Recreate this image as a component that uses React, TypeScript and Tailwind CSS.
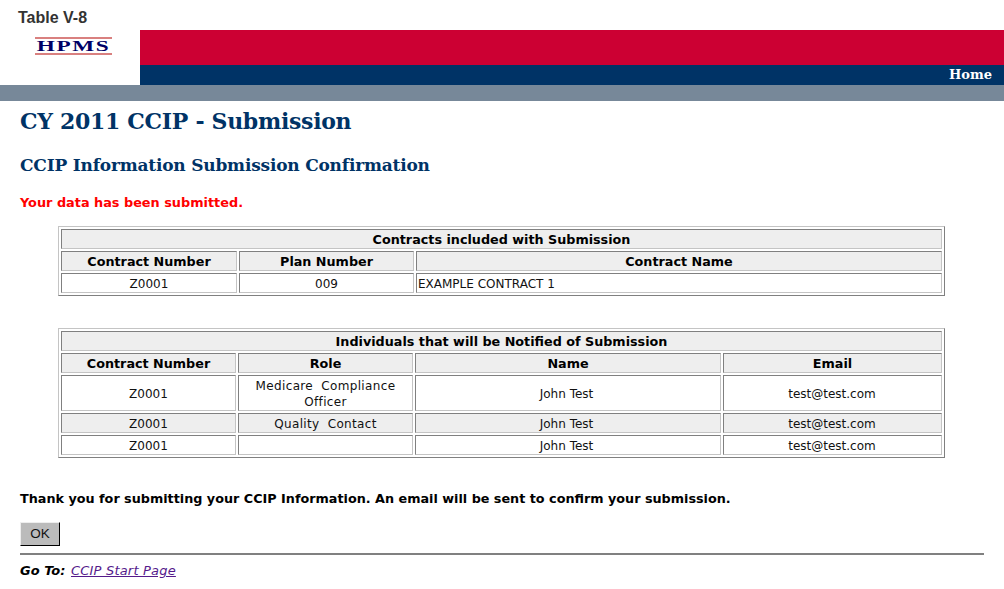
const verdana = 'font-["DejaVu_Sans",Verdana,sans-serif]';

const thClass =
  'h-[20px] pt-[2px] pb-0 text-center text-[12.75px] leading-[16px] font-bold text-black bg-[#eeeeee] border border-t-[#808080] border-l-[#808080] border-r-[#c4c4c4] border-b-[#c4c4c4]';
const tdClass =
  'h-[20px] pt-[2px] pb-0 text-center text-[12px] leading-[16px] font-normal text-[#111] border border-t-[#808080] border-l-[#808080] border-r-[#c4c4c4] border-b-[#c4c4c4]';
const tableClass =
  'ml-[38px] w-[887px] table-fixed border-separate border-spacing-[2px] border border-t-[#c4c4c4] border-l-[#c4c4c4] border-r-[#808080] border-b-[#808080]';

const contracts = [{ number: 'Z0001', plan: '009', name: 'EXAMPLE CONTRACT 1' }];

const individuals = [
  { number: 'Z0001', role: 'Medicare Compliance Officer', name: 'John Test', email: 'test@test.com' },
  { number: 'Z0001', role: 'Quality Contact', name: 'John Test', email: 'test@test.com' },
  { number: 'Z0001', role: '', name: 'John Test', email: 'test@test.com' },
];

const Header: React.FC = () => (
  <div>
    <div className="flex h-[85px]">
      <div className="w-[140px] shrink-0">
        <p className='pl-[18px] pt-[9px] font-["Liberation_Sans",Arial,sans-serif] text-[16px] leading-[17px] font-bold text-[#333]'>
          Table V-8
        </p>
        <div className="ml-[35px] mt-[11px] w-[77px] border-y-2 border-[#d9807f] text-center">
          <p className='scale-x-[1.55] font-["Liberation_Serif",serif] text-[15px] leading-[14px] font-bold tracking-[1px] text-[#000066]'>
            HPMS
          </p>
        </div>
      </div>
      <div className="flex flex-1 flex-col">
        <div className="h-[30px]" />
        <div className="h-[35px] bg-[#cc0033]" />
        <div className='h-[20px] bg-[#003366] pr-[12px] text-right font-["DejaVu_Serif",serif] text-[13px] leading-[20px] font-bold text-white'>
          Home
        </div>
      </div>
    </div>
    <div className="h-[16px] bg-[#778899]" />
  </div>
);

export default function App() {
  return (
    <div className={`h-[589px] w-[1004px] overflow-hidden bg-white ${verdana}`}>
      <Header />
      <div className="px-[20px]">
        <h1 className='pt-[5px] font-["DejaVu_Serif",serif] text-[22px] leading-[30px] font-bold tracking-[-0.3px] text-[#003366]'>
          CY 2011 CCIP - Submission
        </h1>
        <h2 className='pt-[17px] font-["DejaVu_Serif",serif] text-[17px] leading-[24px] font-bold tracking-[-0.2px] text-[#003366]'>
          CCIP Information Submission Confirmation
        </h2>
        <p className="pt-[17px] text-[12.85px] leading-[18px] font-bold text-[#ff0000]">
          Your data has been submitted.
        </p>

        <table className={`mt-[14px] ${tableClass}`}>
          <colgroup>
            <col className="w-[176px]" />
            <col className="w-[175px]" />
            <col />
          </colgroup>
          <thead>
            <tr>
              <th colSpan={3} className={thClass}>Contracts included with Submission</th>
            </tr>
            <tr>
              <th className={thClass}>Contract Number</th>
              <th className={thClass}>Plan Number</th>
              <th className={thClass}>Contract Name</th>
            </tr>
          </thead>
          <tbody>
            {contracts.map((c) => (
              <tr key={c.name}>
                <td className={tdClass}>{c.number}</td>
                <td className={tdClass}>{c.plan}</td>
                <td className={`!text-left pl-px ${tdClass}`}>{c.name}</td>
              </tr>
            ))}
          </tbody>
        </table>

        <table className={`mt-[32px] ${tableClass}`}>
          <colgroup>
            <col className="w-[175px]" />
            <col className="w-[175px]" />
            <col className="w-[306px]" />
            <col />
          </colgroup>
          <thead>
            <tr>
              <th colSpan={4} className={thClass}>Individuals that will be Notified of Submission</th>
            </tr>
            <tr>
              <th className={thClass}>Contract Number</th>
              <th className={thClass}>Role</th>
              <th className={thClass}>Name</th>
              <th className={thClass}>Email</th>
            </tr>
          </thead>
          <tbody>
            {individuals.map((p, i) => (
              <tr key={i} className={i === 1 ? 'bg-[#eeeeee]' : ''}>
                <td className={tdClass}>{p.number}</td>
                <td className={`tracking-[0.35px] [word-spacing:4px] ${tdClass}`}>{p.role}</td>
                <td className={`pr-[3px] ${tdClass}`}>{p.name}</td>
                <td className={`pr-px ${tdClass}`}>{p.email}</td>
              </tr>
            ))}
          </tbody>
        </table>

        <p className="pt-[32px] text-[12.77px] leading-[18px] font-bold text-black">
          Thank you for submitting your CCIP Information. An email will be sent to confirm your submission.
        </p>
        <button className='mt-[14px] block h-[24px] w-[40px] border border-t-[#eeeeee] border-l-[#eeeeee] border-r-black border-b-black bg-[#bbbbbb] font-["Liberation_Sans",Arial,sans-serif] text-[13.5px] text-[#111]'>
          OK
        </button>
        <hr className="mt-[7px] h-[2px] border-0 bg-[#808080]" />
        <p className="pt-[7px] text-[13px] leading-[18px] text-black">
          <span className="font-bold italic">Go To: </span>
          <a href="#" className="ml-px italic tracking-[0.2px] text-[#551a8b] underline">CCIP Start Page</a>
        </p>
      </div>
    </div>
  );
}
